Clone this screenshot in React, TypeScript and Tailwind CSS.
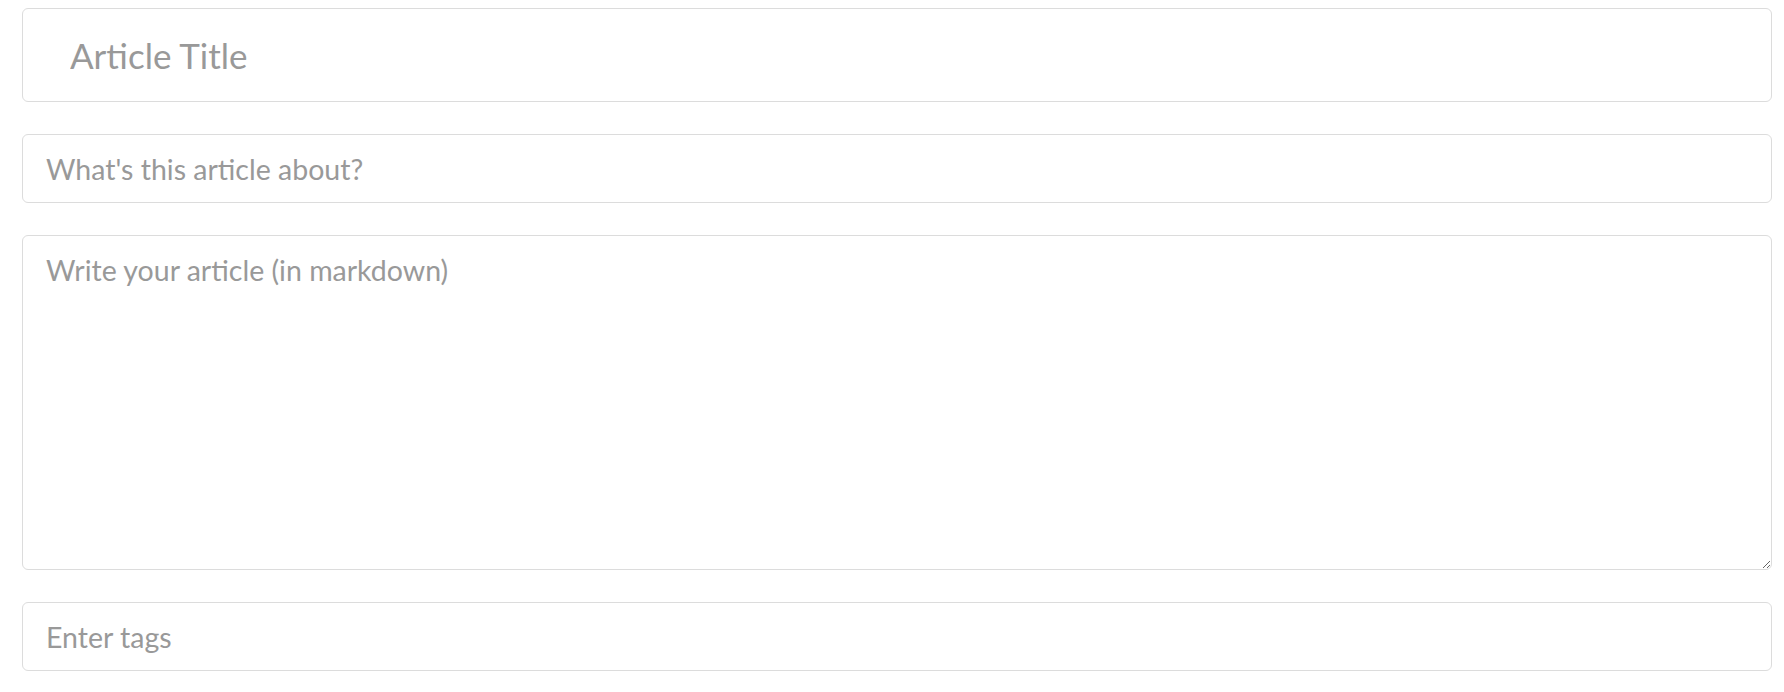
import React from 'react';

const field =
  "block w-full rounded-[6px] border border-[#dcdcdc] bg-white text-[#555] placeholder:text-[#999] outline-none font-['Lato',sans-serif]";

export default function App() {
  return (
    <div className="bg-white pl-[22px] pr-[12px] pt-[8px] pb-[21px] flex flex-col gap-[32px]">
      <input
        type="text"
        placeholder="Article Title"
        className={`${field} h-[94px] px-[47px] text-[35px]`}
      />
      <input
        type="text"
        placeholder="What's this article about?"
        className={`${field} h-[69px] px-[23px] text-[28.5px]`}
      />
      <textarea
        rows={8}
        placeholder="Write your article (in markdown)"
        className={`${field} h-[335px] px-[23px] py-[15px] text-[28.5px] leading-[1.4]`}
      />
      <input
        type="text"
        placeholder="Enter tags"
        className={`${field} h-[69px] px-[23px] text-[28.5px]`}
      />
    </div>
  );
}
